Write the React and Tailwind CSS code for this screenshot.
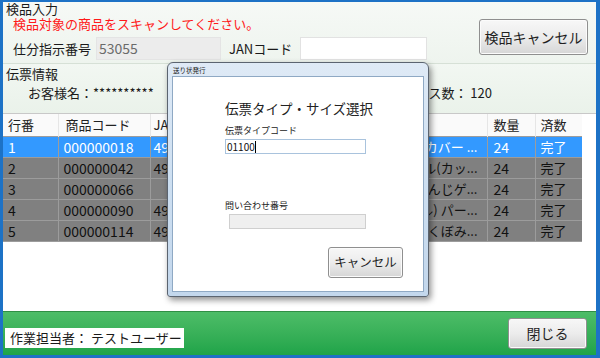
import React from "react";

const rows = [
  { n: "1", code: "000000018", jan: "4901234567890", name: "オリジナルブックカバー ...", sel: true },
  { n: "2", code: "000000042", jan: "4901234567891", name: "ペーパータオル(カッ...", sel: false },
  { n: "3", code: "000000066", jan: "", name: "ポリ袋 ひもんじゲ...", sel: false },
  { n: "4", code: "000000090", jan: "4901234567892", name: "ハンドタオル(ブル) パー...", sel: false },
  { n: "5", code: "000000114", jan: "4901234567893", name: "ペーパーボウル くぼみ...", sel: false },
];

function Btn({ children, className = "" }) {
  return (
    <div
      className={
        "flex items-center justify-center rounded-[3px] border border-[#8f8f8f] bg-gradient-to-b from-[#f7f7f7] via-[#ececec] to-[#d6d6d6] text-[#1f1f1f] shadow-[inset_0_0_0_1px_#fbfbfb] " +
        className
      }
    >
      {children}
    </div>
  );
}

export default function App() {
  return (
    <div className="relative w-[600px] h-[358px] overflow-hidden border-l-[3px] border-r-[4px] border-t-[2px] border-b-[3px] border-[#1d72c6] bg-white font-['Noto_Sans_CJK_JP','Liberation_Sans',sans-serif] text-[#1a1a1a]">
      <div className="flex h-full flex-col">
        {/* 検品入力 */}
        <div className="flex h-[62px] shrink-0 border-b border-[#d6e0d6] bg-gradient-to-b from-[#f6f9f6] to-[#eef4ee]">
          <div className="flex flex-1 flex-col">
            <div className="pl-[3px] text-[13px] leading-[14px]">検品入力</div>
            <div className="pl-[10px] text-[13px] leading-[15px] text-[#ff1a1a]">
              検品対象の商品をスキャンしてください。
            </div>
            <div className="mt-[6px] flex items-center pl-[10px]">
              <span className="text-[13px] leading-[16px]">仕分指示番号</span>
              <div className="ml-[5px] flex h-[23px] w-[125px] items-center border border-[#e4e4e4] bg-[#ececec] pl-[2px] text-[14px] text-[#6a6a6a]">
                53055
              </div>
              <span className="ml-[8px] text-[13px] leading-[16px]">JANコード</span>
              <div className="ml-[8px] h-[23px] w-[127px] border border-[#e2e2e2] bg-white" />
            </div>
          </div>
          <Btn className="mr-[8px] mt-[17px] h-[36px] w-[109px] text-[14px]">検品キャンセル</Btn>
        </div>

        {/* 伝票情報 */}
        <div className="flex h-[49px] shrink-0 flex-col bg-gradient-to-b from-[#f2f7f2] to-[#eaf2ea] pt-[3px]">
          <div className="pl-[3px] text-[13px] leading-[14px]">伝票情報</div>
          <div className="mt-[4px] flex items-center pl-[25px] pr-[104px] text-[13px] leading-[16px]">
            <span>お客様名：**********</span>
            <span className="ml-auto">ケース数： 120</span>
          </div>
        </div>

        {/* table */}
        <div className="flex-1 border-t border-[#c8c8c8] bg-white">
          <table className="w-[579px] table-fixed border-collapse">
            <colgroup>
              <col className="w-[55px]" />
              <col className="w-[92px]" />
              <col className="w-[140px]" />
              <col className="w-[197px]" />
              <col className="w-[48px]" />
              <col className="w-[47px]" />
            </colgroup>
            <thead>
              <tr className="h-[22px] bg-[#fafafa] text-left text-[13px] font-normal text-[#222]">
                <th className="border-r border-[#e6e6e6] pl-[5px] font-normal">行番</th>
                <th className="border-r border-[#e6e6e6] pl-[7px] font-normal">商品コード</th>
                <th className="border-r border-[#e6e6e6] pl-[3px] font-normal">JANコード</th>
                <th className="border-r border-[#e6e6e6] pl-[5px] font-normal">商品名</th>
                <th className="border-r border-[#e6e6e6] pl-[6px] font-normal">数量</th>
                <th className="pl-[5px] font-normal">済数</th>
              </tr>
            </thead>
            <tbody>
              {rows.map((r) => (
                <tr
                  key={r.n}
                  className={
                    "h-[21px] " +
                    (r.sel ? "bg-[#3399ff] text-white" : "bg-[#808080] text-[#111]")
                  }
                >
                  <td className="border border-l-0 border-[#9c9c9c] pl-[5px] text-[14px] leading-[16px]">{r.n}</td>
                  <td className="border border-[#9c9c9c] pl-[5px] text-[14px] leading-[16px]">{r.code}</td>
                  <td className="overflow-hidden whitespace-nowrap border border-[#9c9c9c] pl-[3px] text-[14px] leading-[16px]">{r.jan}</td>
                  <td className="overflow-hidden whitespace-nowrap border border-[#9c9c9c] pr-[9px] text-right text-[13px] leading-[16px]">{r.name}</td>
                  <td className="border border-[#9c9c9c] pl-[6px] text-[14px] leading-[16px]">24</td>
                  <td className="border border-r-0 border-[#9c9c9c] pl-[5px] text-[13px] leading-[16px]">完了</td>
                </tr>
              ))}
            </tbody>
          </table>
        </div>

        {/* footer */}
        <div className="flex h-[44px] shrink-0 items-end border-t border-[#2f8f45] bg-gradient-to-b from-[#4dbd68] to-[#1ea449] pb-[6px]">
          <div className="mb-[1px] ml-[2px] flex h-[20px] w-[179px] items-center bg-white pl-[5px] text-[13px] leading-[16px]">
            作業担当者： テストユーザー
          </div>
          <Btn className="ml-auto mr-[9px] h-[31px] w-[79px] text-[14px]">閉じる</Btn>
        </div>
      </div>

      {/* dialog */}
      <div className="absolute left-[164px] top-[60px] flex h-[235px] w-[262px] flex-col rounded-t-[6px] rounded-b-[3px] border border-[#5b6470] bg-gradient-to-b from-[#dfeaf6] via-[#cddff1] to-[#c3d7ec] px-[4px] pb-[4px] shadow-[2px_3px_6px_rgba(0,0,0,0.45)]">
        <div className="h-[13px] pl-[1px] pt-[3px] text-[6.5px] leading-[8px] text-[#222]">送り状発行</div>
        <div className="flex flex-1 flex-col border border-[#8fa9c4] bg-white pl-[52px]">
          <div className="mt-[23px] text-[13.5px] leading-[16px] text-[#222]">伝票タイプ・サイズ選択</div>
          <div className="mt-[9px] text-[9px] leading-[11px] text-[#222]">伝票タイプコード</div>
          <div className="mt-[3px] flex h-[15px] w-[141px] items-center border border-[#a9c3dd] bg-white pl-[1px] text-[10px] leading-[12px] text-[#111]">
            <span className="border-r border-black">01100</span>
          </div>
          <div className="mt-[46px] text-[9px] leading-[11px] text-[#222]">問い合わせ番号</div>
          <div className="ml-[4px] mt-[3px] h-[15px] w-[137px] border border-[#cfcfcf] bg-[#efefef]" />
          <Btn className="ml-[103px] mt-[18px] h-[31px] w-[75px] text-[12.5px]">キャンセル</Btn>
        </div>
      </div>
    </div>
  );
}
